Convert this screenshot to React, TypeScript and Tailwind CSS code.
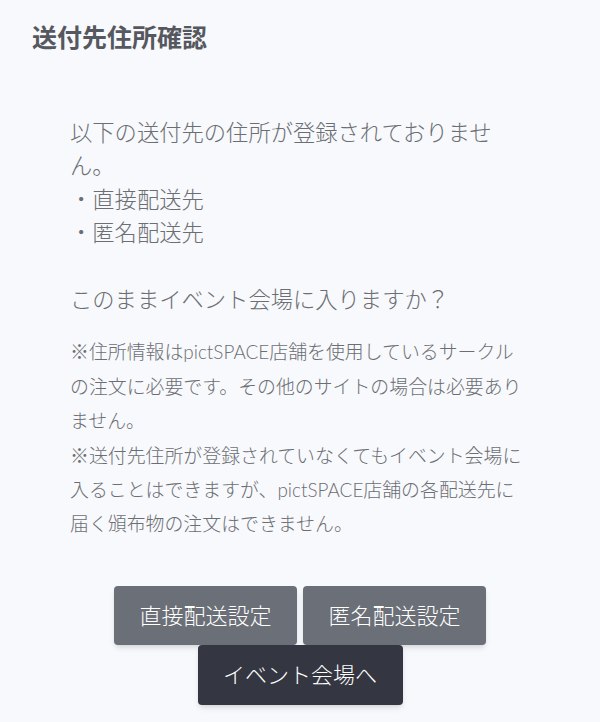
const FONT = "font-['Lato','Noto_Sans_CJK_JP',sans-serif]";

export default function App() {
  return (
    <div className={`min-h-[722px] bg-[#f8f9fc] ${FONT}`}>
      <h1 className="px-8 pt-[19px] text-[25px] font-bold leading-[37px] text-[#55585e]">
        送付先住所確認
      </h1>

      <div className="mx-[70px] mt-[60px] w-[460px] font-light">
        <p className="text-[22.3px] leading-[33.4px] text-[#6b6e73]">
          以下の送付先の住所が登録されておりません。
          <br />
          ・直接配送先
          <br />
          ・匿名配送先
          <br />
          <br />
          このままイベント会場に入りますか？
        </p>

        <p className="mt-[19px] text-[18.9px] leading-[34.4px] text-[#6b6e73]">
          ※住所情報はpictSPACE店舗を使用しているサークルの注文に必要です。その他のサイトの場合は必要ありません。
          <br />
          ※送付先住所が登録されていなくてもイベント会場に入ることはできますが、pictSPACE店舗の各配送先に届く頒布物の注文はできません。
        </p>

        <div className="mt-[44px] flex flex-wrap justify-center gap-x-[6px]">
          <button className="h-[59px] w-[183px] rounded-[4px] bg-[#6b6f77] text-[22px] text-white shadow-md">
            直接配送設定
          </button>
          <button className="h-[59px] w-[183px] rounded-[4px] bg-[#6b6f77] text-[22px] text-white shadow-md">
            匿名配送設定
          </button>
          <button className="h-[60px] w-[205px] rounded-[4px] bg-[#343741] text-[22px] text-white shadow-md">
            イベント会場へ
          </button>
        </div>
      </div>
    </div>
  );
}
